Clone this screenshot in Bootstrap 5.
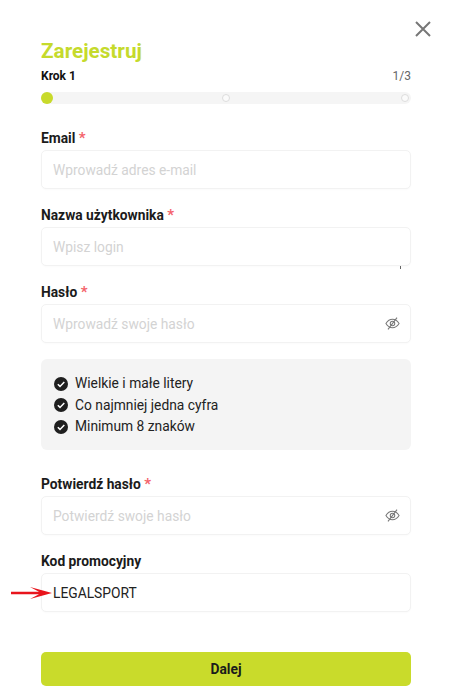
<!DOCTYPE html>
<html lang="pl">
<head>
  <meta charset="UTF-8">
  <meta name="viewport" content="width=device-width, initial-scale=1.0">
  <title>Zarejestruj</title>
  <link href="https://cdn.jsdelivr.net/npm/bootstrap@5.3.0/dist/css/bootstrap.min.css" rel="stylesheet">
  <style>
    body {
      background: #fff;
      color: #1b1b1b;
      font-family: Roboto, "Liberation Sans", sans-serif;
      overflow: hidden;
    }
    .rej-wrap { width: 450px; height: 693px; padding: 20px 39px 0 41px; position: relative; }
    .rej-close { margin-right: -21px; height: 18px; }
    .rej-title { color: #c5da2c; font-size: 20.7px; font-weight: 700; line-height: 25px; margin: 0; padding-top: 1px; }
    .rej-step { font-size: 12px; line-height: 14px; margin-top: 5px; }
    .rej-step b { font-weight: 700; color: #111; }
    .rej-step span { color: #666; }
    .rej-bar { height: 12px; background: #f5f5f5; border-radius: 6px; margin-top: 9px; margin-bottom: 24px; }
    .rej-dot { width: 12px; height: 12px; border-radius: 50%; background: #c8da2b; }
    .rej-dot-off { width: 8px; height: 8px; margin-right: 2px; border-radius: 50%; background: #fbfbfb; border: 1px solid #ddd; }
    .rej-label { font-size: 13.8px; font-weight: 700; line-height: 20px; margin-bottom: 2px; color: #1b1b1b; display: block; }
    .rej-label i { color: #f4636b; font-style: normal; font-weight: 700; font-size: 15px; }
    .rej-input.form-control {
      height: 39px; border: 1px solid #f2f2f2; border-radius: 5px; font-size: 13.8px;
      padding: 0 11px; color: #222; box-shadow: 0 1px 2px rgba(0,0,0,.02);
    }
    .rej-input.form-control::placeholder { color: #d3d3d3; opacity: 1; }
    .rej-field { margin-bottom: 16px; }
    .rej-eye { position: absolute; right: 11px; top: 12px; }
    .rej-tick { position: absolute; left: 359px; top: 61px; width: 1px; height: 3px; background: #666; }
    .rej-rules { background: #f4f4f4; border-radius: 6px; padding: 14px 12px 12px 13px; height: 91px; margin-bottom: 24px; font-size: 13.8px; line-height: 21.5px; color: #222; }
    .rej-rules .gap-7 { gap: 7px; }
    .rej-rules svg { flex: none; }
    .rej-next.btn {
      width: 100%; height: 34px; background: #c9db2b; border: 0; border-radius: 5px; color: #1b1b1b;
      font-size: 13.8px; font-weight: 700; margin-top: 40px; padding: 0;
    }
    .rej-arrow { position: absolute; left: 11px; top: 587px; }
  </style>
</head>
<body>

<div class="rej-wrap">
  <div class="rej-close d-flex justify-content-end">
    <svg width="18" height="18" viewBox="0 0 18 18"><path d="M2 2L16 16M16 2L2 16" stroke="#777" stroke-width="2" fill="none"/></svg>
  </div>
  <h1 class="rej-title">Zarejestruj</h1>
  <div class="rej-step d-flex justify-content-between"><b>Krok 1</b><span>1/3</span></div>
  <div class="rej-bar d-flex justify-content-between align-items-center">
    <div class="rej-dot"></div>
    <div class="rej-dot-off"></div>
    <div class="rej-dot-off"></div>
  </div>

  <form>
    <div class="rej-field">
      <label class="rej-label">Email <i>*</i></label>
      <input type="text" class="form-control rej-input" placeholder="Wprowadź adres e-mail">
    </div>
    <div class="rej-field position-relative">
      <label class="rej-label">Nazwa użytkownika <i>*</i></label>
      <input type="text" class="form-control rej-input" placeholder="Wpisz login">
      <div class="rej-tick"></div>
    </div>
    <div class="rej-field">
      <label class="rej-label">Hasło <i>*</i></label>
      <div class="position-relative">
        <input type="password" class="form-control rej-input" placeholder="Wprowadź swoje hasło">
        <svg class="rej-eye" width="15" height="15" viewBox="0 0 16 16" fill="none" stroke="#777" stroke-width="1.1"><path d="M1 8C3 4.800 5.300 3.500 8 3.500S13 4.800 15 8C13 11.200 10.700 12.500 8 12.500S3 11.200 1 8Z"/><circle cx="8" cy="8" r="2.400"/><path d="M12.800 1.800L3.200 14.200"/></svg>
      </div>
    </div>

    <div class="rej-rules">
      <div class="d-flex align-items-center gap-7">
        <svg width="14" height="14" viewBox="0 0 14 14"><circle cx="7" cy="7" r="7" fill="#1f1f1f"/><path d="M3.800 7.200L6 9.400L10.300 4.900" stroke="#fff" stroke-width="1.500" fill="none"/></svg>
        <span>Wielkie i małe litery</span>
      </div>
      <div class="d-flex align-items-center gap-7">
        <svg width="14" height="14" viewBox="0 0 14 14"><circle cx="7" cy="7" r="7" fill="#1f1f1f"/><path d="M3.800 7.200L6 9.400L10.300 4.900" stroke="#fff" stroke-width="1.500" fill="none"/></svg>
        <span>Co najmniej jedna cyfra</span>
      </div>
      <div class="d-flex align-items-center gap-7">
        <svg width="14" height="14" viewBox="0 0 14 14"><circle cx="7" cy="7" r="7" fill="#1f1f1f"/><path d="M3.800 7.200L6 9.400L10.300 4.900" stroke="#fff" stroke-width="1.500" fill="none"/></svg>
        <span>Minimum 8 znaków</span>
      </div>
    </div>

    <div class="rej-field">
      <label class="rej-label">Potwierdź hasło <i>*</i></label>
      <div class="position-relative">
        <input type="password" class="form-control rej-input" placeholder="Potwierdź swoje hasło">
        <svg class="rej-eye" width="15" height="15" viewBox="0 0 16 16" fill="none" stroke="#777" stroke-width="1.1"><path d="M1 8C3 4.800 5.300 3.500 8 3.500S13 4.800 15 8C13 11.200 10.700 12.500 8 12.500S3 11.200 1 8Z"/><circle cx="8" cy="8" r="2.400"/><path d="M12.800 1.800L3.200 14.200"/></svg>
      </div>
    </div>
    <div>
      <label class="rej-label">Kod promocyjny</label>
      <input type="text" class="form-control rej-input" value="LEGALSPORT">
    </div>
    <button type="button" class="btn rej-next">Dalej</button>
  </form>

  <svg class="rej-arrow" width="42" height="12" viewBox="0 0 42 12"><path d="M0 4.800H28L19 0L41 6L19 12L28 7.200H0Z" fill="#e8141c"/></svg>
</div>

<script src="https://cdn.jsdelivr.net/npm/bootstrap@5.3.0/dist/js/bootstrap.bundle.min.js"></script>
</body>
</html>
